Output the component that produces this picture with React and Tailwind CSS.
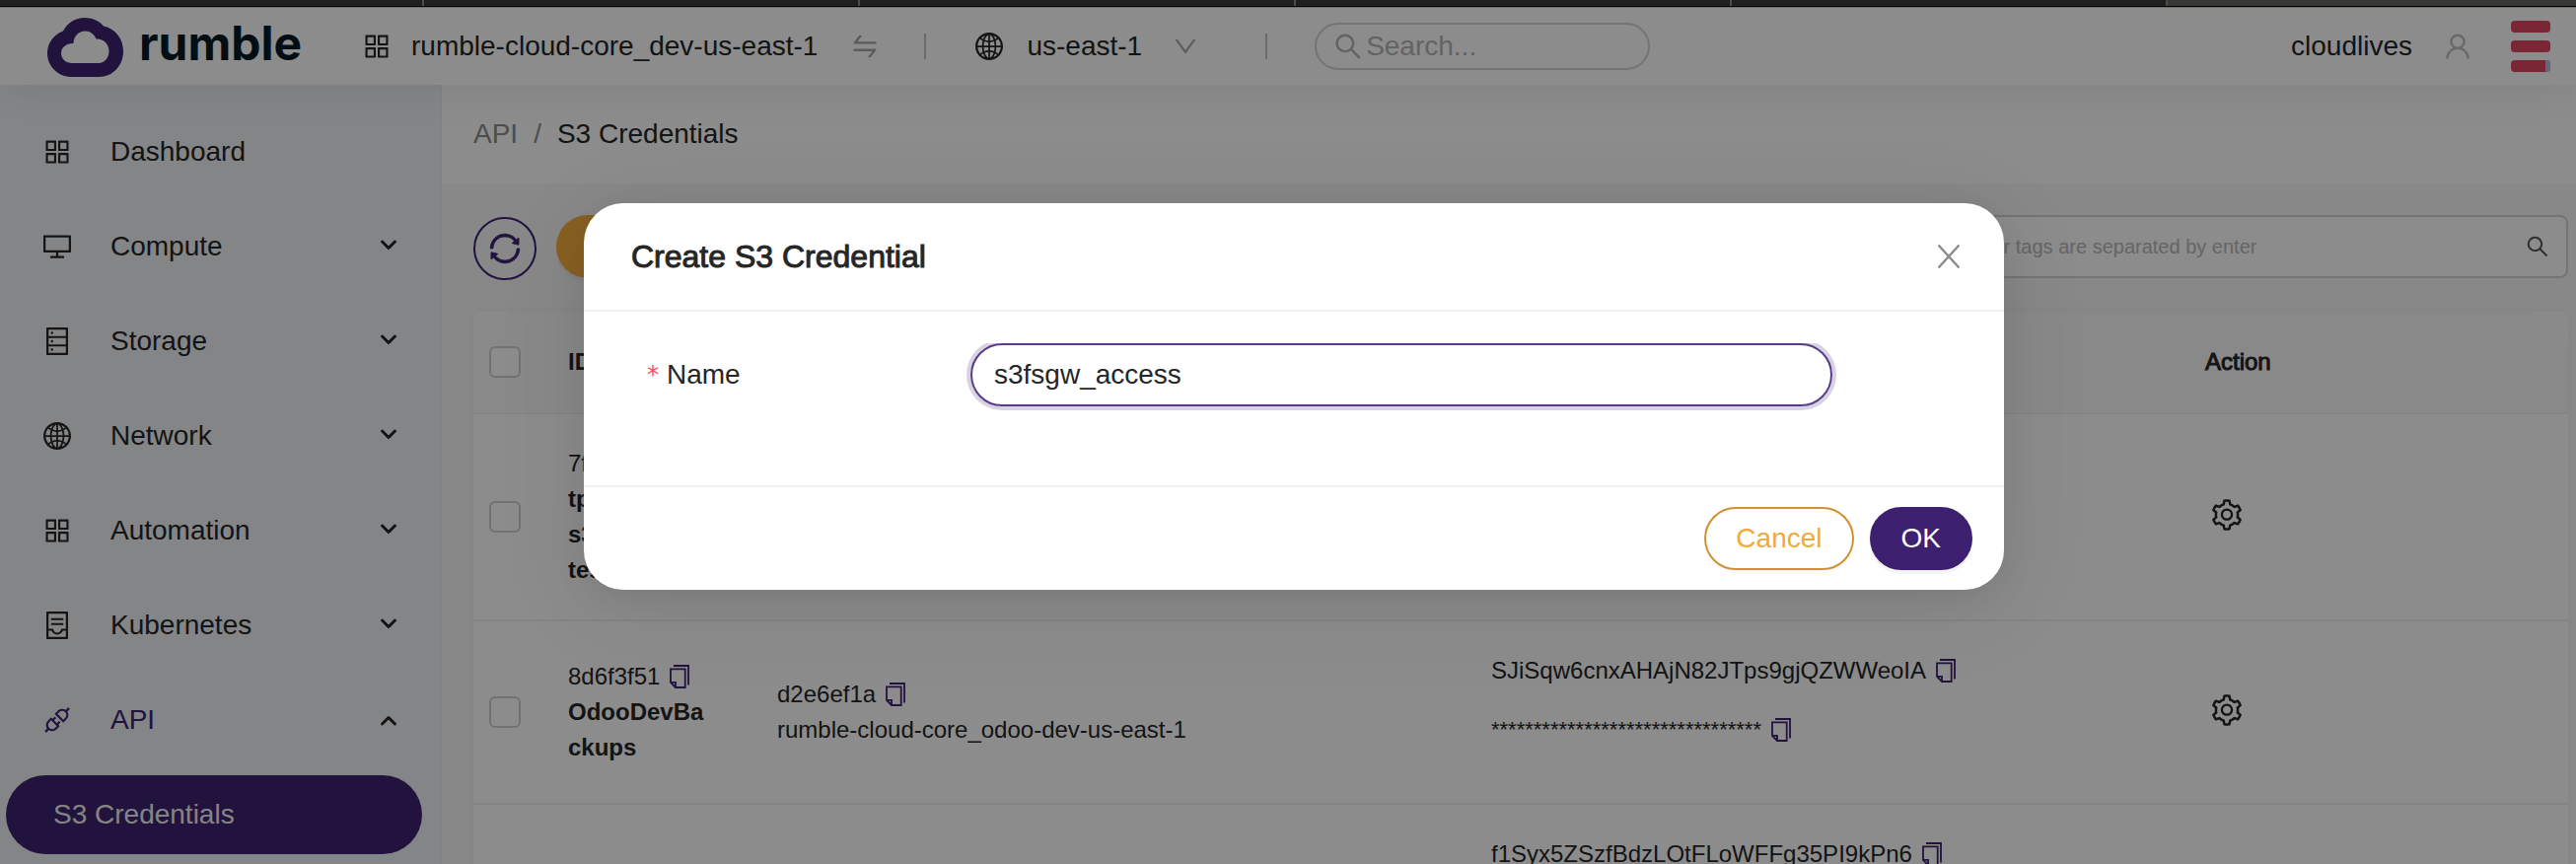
import React, { useState } from "react";
import {
  AiOutlineApi,
  AiOutlineAppstore,
  AiOutlineContainer,
  AiOutlineDatabase,
  AiOutlineDesktop,
  AiOutlineDown,
  AiOutlineGlobal,
  AiOutlineSearch,
  AiOutlineSetting,
  AiOutlineSwap,
  AiOutlineSync,
  AiOutlineUser,
} from "react-icons/ai";

const MENU = [
  { label: "Dashboard", icon: AiOutlineAppstore },
  { label: "Compute", icon: AiOutlineDesktop, group: true },
  { label: "Storage", icon: AiOutlineDatabase, group: true },
  { label: "Network", icon: AiOutlineGlobal, group: true },
  { label: "Automation", icon: AiOutlineAppstore, group: true },
  { label: "Kubernetes", icon: AiOutlineContainer, group: true },
  { label: "API", icon: AiOutlineApi, group: true, open: true },
];

function TabStrip() {
  return (
    <div className="flex h-[7px] shrink-0 border-b border-black bg-[#383835]">
      <span className="w-[430px] border-r-2 border-[#4c4c4a] bg-[#1f1f1f]" />
      <span className="w-[442px] border-r-2 border-[#4c4c4a] bg-[#1f1f1f]" />
      <span className="w-[442px] border-r-2 border-[#4c4c4a] bg-[#1f1f1f]" />
      <span className="w-[442px] border-r-2 border-[#4c4c4a] bg-[#1f1f1f]" />
      <span className="w-[442px] border-r-2 border-[#4c4c4a] bg-[#1f1f1f]" />
    </div>
  );
}

function Logo() {
  return (
    <a href="#home" className="flex w-[318px] items-center gap-4 pt-0.5">
      <svg width="77" height="60" viewBox="0 0 77 60" aria-hidden="true">
        <path
          fill="#3e2171"
          fillRule="evenodd"
          d="M25 60C11 60 0 49.500 0 36C0 25.500 6.500 17 16 13.500C20.500 5 28.500 0 38 0C45.500 0 52.500 3 57 8.500C69 11 77 21.500 77 34C77 48.500 66.500 60 52 60ZM25 46H52C58 46 62.500 40.500 62.500 34C62.500 26.500 57 21 49.500 21.500C47.500 16.500 43.500 13.500 38.500 13.500C31.500 13.500 26.500 19 26.500 26C19.500 25.500 14 30 14 36C14 42 19 46 25 46Z"
        />
      </svg>
      <span className="pb-2 font-[Inter,sans-serif] text-5xl leading-none font-bold text-[#071a26]">rumble</span>
    </a>
  );
}

function TopBar() {
  return (
    <header className="relative z-10 flex h-[79px] shrink-0 items-center border-t border-[#c8c8c8] bg-white pr-[26px] pl-12 shadow-[0_4px_40px_rgba(0,0,0,0.08)]">
      <Logo />
      <AiOutlineAppstore className="size-8" />
      <span className="ml-[19px]">rumble-cloud-core_dev-us-east-1</span>
      <button type="button" aria-label="Switch project" className="ml-8 text-[#a6a6a6]">
        <AiOutlineSwap className="size-8" />
      </button>
      <span className="ml-11 h-[26px] w-0.5 bg-[#c4c4c4]" />
      <AiOutlineGlobal className="ml-12 size-8" />
      <span className="ml-[22px]">us-east-1</span>
      <button type="button" aria-label="Change region" className="ml-[30px] text-[#a6a6a6]">
        <AiOutlineDown className="size-7" />
      </button>
      <span className="ml-[67px] h-[26px] w-0.5 bg-[#c4c4c4]" />
      <label className="ml-12 flex h-12 w-[340px] items-center gap-0.5 rounded-full border-2 border-[#d4d4d4] px-4 text-[#b4b4b4]">
        <AiOutlineSearch className="size-8 shrink-0" />
        <input
          type="text"
          aria-label="Search"
          placeholder="Search..."
          className="w-full min-w-0 bg-transparent outline-none placeholder:text-[#b4b4b4]"
        />
      </label>
      <span className="ml-auto">cloudlives</span>
      <button type="button" aria-label="Account" className="ml-[30px] text-[#bfbfbf]">
        <AiOutlineUser className="size-8" />
      </button>
      <button type="button" aria-label="Menu" className="ml-[38px] flex flex-col gap-2">
        <span className="h-3 w-10 rounded-sm bg-[#e04562]" />
        <span className="h-3 w-10 rounded-sm bg-[#e04562]" />
        <span className="flex h-3 w-10 overflow-hidden rounded-sm bg-[#e04562]">
          <span className="ml-auto w-[5px] bg-[#adc1e9]" />
        </span>
      </button>
    </header>
  );
}

function Chevron({ up }) {
  return (
    <svg width="18" height="16" viewBox="0 0 18 16" fill="none" stroke="#262626" strokeWidth="3" strokeLinecap="round" strokeLinejoin="round" aria-hidden="true">
      <path d={up ? "M2.500 12L9 5.500L15.500 12" : "M2.500 3L9 9.500L15.500 3"} />
    </svg>
  );
}

function Sidebar() {
  return (
    <nav className="w-[448px] shrink-0 border-r-2 border-[#eceef1] bg-[#f0f2f5] pt-5">
      {MENU.map(({ label, icon: Icon, group, open }) => (
        <button
          key={label}
          type="button"
          className={`flex h-24 w-full items-center pr-[43px] pl-[42px] text-left ${open ? "text-[#3e2171]" : ""}`}
        >
          <Icon className="size-8" />
          <span className="ml-[38px] flex-1">{label}</span>
          {group && <Chevron up={open} />}
        </button>
      ))}
      <a href="#s3" className="mt-2 mr-[18px] ml-1.5 flex h-20 items-center rounded-full bg-[#3e2171] pl-12 text-[#f0f0f0]">
        S3 Credentials
      </a>
    </nav>
  );
}

function CopyIcon() {
  return (
    <svg width="20" height="24" viewBox="0 0 20 24" fill="none" stroke="currentColor" strokeWidth="1.8" aria-hidden="true">
      <path d="M1 4.300H15.700V23H6L1 18Z" />
      <path d="M1 17.800H6V23" />
      <path d="M4 1H19V20.500" />
    </svg>
  );
}

function CopyLine({ children, mask }) {
  return (
    <p className="flex h-9 items-center gap-2.5">
      <span className={mask ? "text-[22px]" : ""}>{children}</span>
      <button type="button" aria-label="Copy" className="text-[#3e2171]">
        <CopyIcon />
      </button>
    </p>
  );
}

function Check({ label }) {
  return (
    <input
      type="checkbox"
      aria-label={label}
      className="block size-8 appearance-none rounded-md border-2 border-[#d0d0d0] bg-white"
    />
  );
}

function Gear() {
  return (
    <button type="button" aria-label="Row actions" className="ml-1 block pb-1">
      <AiOutlineSetting className="size-9" />
    </button>
  );
}

function CredentialTable() {
  return (
    <div className="rounded-t-lg bg-[#fcfcfc] shadow-[0_0_16px_rgba(0,0,0,0.04)]">
      <table className="w-full table-fixed border-separate border-spacing-0 text-2xl leading-9 [&_td]:border-b-2 [&_td]:border-[#f0f0f0] [&_td]:bg-white [&_th]:border-b-2 [&_th]:border-[#f0f0f0] [&_th]:bg-[#fafafc]">
        <colgroup>
          <col className="w-16" />
          <col className="w-[212px]" />
          <col />
          <col />
          <col className="w-[400px]" />
        </colgroup>
        <thead>
          <tr className="h-[104px] text-left">
            <th className="rounded-tl-[40px] px-4">
              <Check label="Select all" />
            </th>
            <th className="px-8 font-bold">ID</th>
            <th />
            <th />
            <th className="rounded-tr-[40px] px-8 font-normal [-webkit-text-stroke:1px]">Action</th>
          </tr>
        </thead>
        <tbody>
          <tr>
            <td className="px-4"><Check label="Select row 1" /></td>
            <td className="px-8 py-8">
              <p>7f</p>
              <p className="font-bold">tp</p>
              <p className="font-bold">s3</p>
              <p className="font-bold">tes</p>
            </td>
            <td />
            <td />
            <td className="px-8"><Gear /></td>
          </tr>
          <tr>
            <td className="px-4"><Check label="Select row 2" /></td>
            <td className="px-8 py-8">
              <CopyLine>8d6f3f51</CopyLine>
              <p className="font-bold break-all">OdooDevBackups</p>
            </td>
            <td className="px-8">
              <CopyLine>d2e6ef1a</CopyLine>
              <p>rumble-cloud-core_odoo-dev-us-east-1</p>
            </td>
            <td className="px-8 py-8">
              <div className="flex flex-col gap-6 pb-6">
                <CopyLine>SJiSqw6cnxAHAjN82JTps9gjQZWWeoIA</CopyLine>
                <CopyLine mask>********************************</CopyLine>
              </div>
            </td>
            <td className="px-8"><Gear /></td>
          </tr>
          <tr>
            <td />
            <td />
            <td />
            <td className="px-8 py-8">
              <CopyLine>f1Syx5ZSzfBdzLOtFLoWFFg35PI9kPn6</CopyLine>
            </td>
            <td />
          </tr>
        </tbody>
      </table>
    </div>
  );
}

function Content() {
  return (
    <main className="flex min-w-0 flex-1 flex-col bg-[#f8f8f8]">
      <div className="flex h-[100px] shrink-0 items-center gap-4 bg-white pl-8">
        <a href="#api" className="text-[#8c8c8c]">API</a>
        <span className="text-[#8c8c8c]">/</span>
        <span>S3 Credentials</span>
      </div>
      <div className="pt-8 pr-2 pl-8">
        <div className="mb-8 flex h-[66px] items-start gap-5">
          <button type="button" aria-label="Refresh" className="flex size-16 items-center justify-center self-end rounded-full border-2 border-[#3e2171] text-[#3e2171]">
            <AiOutlineSync className="size-9" stroke="currentColor" strokeWidth="24" />
          </button>
          <button type="button" aria-label="Create" className="h-16 w-[200px] rounded-full bg-[#faaf41] shadow-[0_4px_0_rgba(0,0,0,0.04)]" />
          <div className="ml-auto flex h-16 w-[704px] items-center rounded-lg border-2 border-[#d4d4d4] bg-white pr-4 pl-6">
            <input
              type="text"
              aria-label="Filter"
              placeholder="Multiple filter tags are separated by enter"
              className="min-w-0 flex-1 bg-transparent text-xl outline-none placeholder:text-[#b8b8b8]"
            />
            <button type="button" aria-label="Run filter" className="text-[#505050]">
              <AiOutlineSearch className="size-[26px]" />
            </button>
          </div>
        </div>
        <CredentialTable />
      </div>
    </main>
  );
}

function CreateDialog() {
  const [name, setName] = useState("s3fsgw_access");
  return (
    <div className="absolute inset-0 z-20 flex items-start justify-center bg-black/45 pt-[199px] pl-3">
      <form
        role="dialog"
        aria-labelledby="dialog-title"
        className="w-[1440px] overflow-hidden rounded-[40px] bg-white shadow-[0_8px_32px_rgba(0,0,0,0.08),0_16px_96px_rgba(0,0,0,0.08)]"
      >
        <div className="flex h-[110px] items-center justify-between border-b-2 border-[#f0f0f0] pr-11 pl-12">
          <h2 id="dialog-title" className="text-[32px] [-webkit-text-stroke:1px]">Create S3 Credential</h2>
          <button type="button" aria-label="Close" className="text-[#8c8c8c]">
            <svg width="24" height="26" viewBox="0 0 24 26" fill="none" stroke="currentColor" strokeWidth="2.400" aria-hidden="true">
              <path d="M1.500 1.500L22.500 24.500M22.500 1.500L1.500 24.500" />
            </svg>
          </button>
        </div>
        <div className="px-12 pt-8 pb-20">
          <div className="flex items-center [clip-path:inset(0_-8px_-8px_-8px)]">
            <label htmlFor="credential-name" className="flex w-[344px] items-center gap-2 pl-4">
              <span className="font-['DejaVu_Sans',sans-serif] text-2xl text-[#ff4d4f]">*</span>
              Name
            </label>
            <input
              id="credential-name"
              type="text"
              value={name}
              onChange={(e) => setName(e.target.value)}
              className="h-16 w-[65%] rounded-full border-2 border-[#573a85] px-[22px] shadow-[0_0_0_4px_rgba(62,33,113,0.2)] outline-none"
            />
          </div>
        </div>
        <div className="flex justify-end gap-4 border-t-2 border-[#f0f0f0] px-8 py-5">
          <button type="button" className="h-16 rounded-full border-2 border-[#d19030] px-[30px] text-[#f2a93b] shadow-[0_4px_0_rgba(0,0,0,0.02)]">
            Cancel
          </button>
          <button type="submit" className="h-16 rounded-full border-2 border-[#3d2070] bg-[#3d2070] px-[30px] text-white shadow-[0_4px_0_rgba(0,0,0,0.04)]">
            OK
          </button>
        </div>
      </form>
    </div>
  );
}

export default function App() {
  return (
    <div className="flex h-screen flex-col overflow-hidden font-['Liberation_Sans',Arial,sans-serif] text-[28px] leading-9 text-[#262626]">
      <TabStrip />
      <div className="relative flex min-h-0 flex-1 flex-col overflow-hidden bg-white">
        <TopBar />
        <div className="flex min-h-0 flex-1">
          <Sidebar />
          <Content />
        </div>
        <CreateDialog />
      </div>
    </div>
  );
}
